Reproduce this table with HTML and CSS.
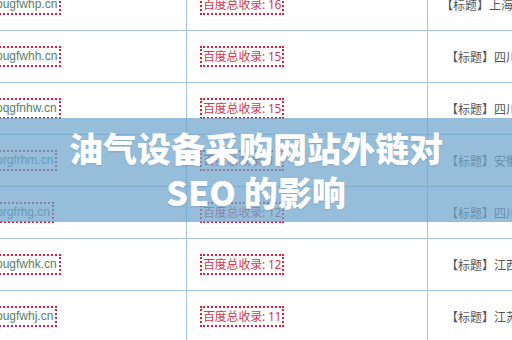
FILE: index.html
```html
<!DOCTYPE html>
<html lang="zh-CN">
<head>
<meta charset="utf-8">
<title>油气设备采购网站外链对 SEO 的影响</title>
<link rel="stylesheet" href="styles.css">
</head>
<body>
<div class="page">
  <div class="table">
    <div class="row">
      <div class="cell c1"><span class="box domain">syougfwhp.cn</span></div>
      <div class="cell c2"><span class="box count">百度总收录: 16</span></div>
      <div class="cell c3 wide">【标题】上海油气设备采购</div>
    </div>
    <div class="row">
      <div class="cell c1"><span class="box domain">syougfwhh.cn</span></div>
      <div class="cell c2"><span class="box count">百度总收录: 15</span></div>
      <div class="cell c3">【标题】四川油气设备</div>
    </div>
    <div class="row">
      <div class="cell c1"><span class="box domain">syoqgfnhw.cn</span></div>
      <div class="cell c2"><span class="box count">百度总收录: 15</span></div>
      <div class="cell c3">【标题】四川油气设备</div>
    </div>
    <div class="row">
      <div class="cell c1"><span class="box domain">syorgfrhm.cn</span></div>
      <div class="cell c2"><span class="box count">百度总收录: 11</span></div>
      <div class="cell c3">【标题】安徽油气设备</div>
    </div>
    <div class="row">
      <div class="cell c1"><span class="box domain">syorgfrhg.cn</span></div>
      <div class="cell c2"><span class="box count">百度总收录: 12</span></div>
      <div class="cell c3">【标题】四川油气设备</div>
    </div>
    <div class="row">
      <div class="cell c1"><span class="box domain">syougfwhk.cn</span></div>
      <div class="cell c2"><span class="box count">百度总收录: 12</span></div>
      <div class="cell c3">【标题】江西油气设备</div>
    </div>
    <div class="row">
      <div class="cell c1"><span class="box domain">syougfwhj.cn</span></div>
      <div class="cell c2"><span class="box count">百度总收录: 11</span></div>
      <div class="cell c3">【标题】江苏油气设备</div>
    </div>
  </div>
  <div class="banner">
    <h1 class="title">油气设备采购网站外链对 SEO 的影响</h1>
  </div>
</div>
</body>
</html>
```
FILE: styles.css
```css
html, body {
  margin: 0;
  padding: 0;
  background: #ffffff;
}
body {
  width: 512px;
  height: 340px;
  overflow: hidden;
  font-family: "Noto Sans", "Noto Sans CJK SC", sans-serif;
}
.page {
  position: relative;
  width: 512px;
  height: 340px;
  overflow: hidden;
}
.table {
  margin-top: -21px;
}
.row {
  display: grid;
  grid-template-columns: 187px 241px 1fr;
  height: 52px;
  box-sizing: border-box;
  border-bottom: 1px solid #a3c6e6;
}
.cell {
  display: flex;
  align-items: center;
  box-sizing: border-box;
  white-space: nowrap;
  overflow: visible;
}
.c1, .c2 {
  border-right: 1px solid #a3c6e6;
}
.c1 {
  padding-left: 0;
}
.c2 {
  padding-left: 13px;
}
.c3 {
  padding-left: 18px;
  font-size: 12px;
  color: #555555;
  font-family: "Noto Sans CJK SC", sans-serif;
}
.c3.wide {
  padding-left: 13px;
}
.box {
  display: inline-block;
  border: 2px dotted #d8203c;
  padding: 0 2px;
  line-height: 17px;
}
.domain {
  margin-left: -20px;
  font-size: 12px;
  color: #5a7b6c;
  font-family: "Liberation Sans", Arial, sans-serif;
}
.count {
  font-size: 12px;
  padding: 0 1px;
  letter-spacing: -0.2px;
  color: #d23a4e;
  font-family: "Noto Sans", "Noto Sans CJK SC", sans-serif;
}
.banner {
  position: absolute;
  left: 0;
  right: 0;
  top: 118px;
  height: 104px;
  box-sizing: border-box;
  padding: 8px 56px;
  background: rgba(110, 165, 205, 0.72);
}
.title {
  margin: 0;
  font-family: "Noto Sans CJK SC", sans-serif;
  font-weight: 900;
  font-size: 34px;
  line-height: 44px;
  color: #ffffff;
  text-align: center;
  text-shadow: 0 1px 2px rgba(0, 0, 0, 0.12);
}
```
